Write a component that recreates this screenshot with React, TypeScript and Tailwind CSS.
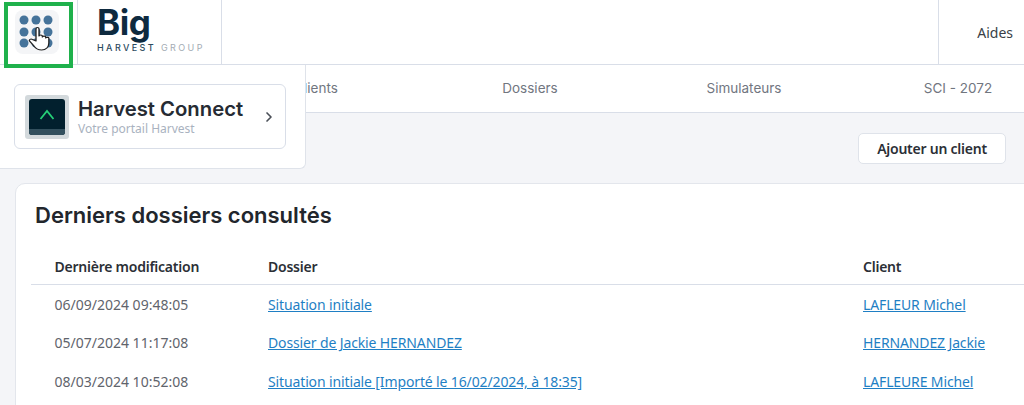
import { ChevronRight } from 'lucide-react'

const rows = [
  { date: '06/09/2024 09:48:05', dossier: 'Situation initiale', client: 'LAFLEUR Michel' },
  { date: '05/07/2024 11:17:08', dossier: 'Dossier de Jackie HERNANDEZ', client: 'HERNANDEZ Jackie' },
  { date: '08/03/2024 10:52:08', dossier: 'Situation initiale [Importé le 16/02/2024, à 18:35]', client: 'LAFLEURE Michel' },
]

const navItems = ['Clients', 'Dossiers', 'Simulateurs', 'SCI - 2072']

function AppsIcon() {
  return (
    <svg width="44" height="44" viewBox="0 0 44 44" className="rounded-lg bg-[#f4f5f7]">
      {[10, 22, 33].flatMap((cy) =>
        [9, 21, 33].map((cx) => <circle key={`${cx}-${cy}`} cx={cx} cy={cy} r="4.500" fill="#45739a" />),
      )}
      <path
        transform="translate(-3 0) scale(1.2 1)"
        d="M20 19c0-2 2.500-2 2.500 0v7c0-1.300 2.800-1.300 2.800 0v1c0-1.200 2.800-1.200 2.800 0v1c0-1 2.600-1 2.600 0v5c0 4-2.300 7-6 7-3 0-4.700-1.300-6.300-3.800l-3.700-5c-1-1.500 1-2.800 2.300-1.700L20 31z"
        fill="#fff"
        stroke="#222"
        strokeWidth="1.100"
        strokeLinejoin="round"
      />
    </svg>
  )
}

function BigLogo() {
  return (
    <div className="flex flex-col pb-[7px]">
      <span className="font-['Inter',sans-serif] text-[35px] leading-[34px] font-bold tracking-[-0.500px] text-[#0e2a3f]">Big</span>
      <span className="mt-[4px] font-['Inter',sans-serif] text-[9px] leading-[9px] tracking-[2.400px] whitespace-nowrap text-[#a3acb4]">
        <span className="font-medium text-[#2c4a5e]">HARVEST</span> GROUP
      </span>
    </div>
  )
}

function HarvestIcon() {
  return (
    <div className="flex h-[44px] w-[44px] items-center justify-center rounded-[3px] bg-[#d3d9dc]">
      <div className="flex h-[36px] w-[36px] flex-col overflow-hidden rounded-[3px] bg-[#02202e]">
        <div className="flex flex-1 items-center justify-center">
          <svg width="16" height="12" viewBox="0 0 16 12" fill="none">
            <path d="M1.500 11 8 3l6.500 8" stroke="#25d077" strokeWidth="1.800" />
          </svg>
        </div>
        <div className="h-[6px] bg-[#33505e]" />
      </div>
    </div>
  )
}

export default function App() {
  return (
    <div className="relative h-[405px] w-[1024px] overflow-hidden bg-[#f4f5f8] font-['Noto_Sans',sans-serif]">
      <header className="flex h-[65px] border-b border-[#d9dee8] bg-white">
        <div className="w-[78px] border-r border-[#d9dee8]" />
        <div className="flex w-[144px] items-center border-r border-[#d9dee8] pl-[19px]">
          <BigLogo />
        </div>
        <div className="ml-auto flex w-[86px] items-center justify-end border-l border-[#d9dee8] pr-[11px] text-[14px] text-[#3a3f47]">
          Aides
        </div>
      </header>

      <nav className="flex h-[48px] items-center border-b border-[#d9dee8] bg-white pl-[209px]">
        {navItems.map((item) => (
          <span key={item} className="w-[214px] shrink-0 text-center font-['Inter',sans-serif] text-[13.500px] text-[#71767f]">
            {item}
          </span>
        ))}
      </nav>

      <div className="flex justify-end pt-[20px] pr-[18px]">
        <button className="h-[31px] w-[148px] rounded-[5px] border border-[#dfe3ea] bg-white text-[14px] font-semibold tracking-[-0.240px] text-[#2b2f36]">
          Ajouter un client
        </button>
      </div>

      <section className="mt-[19px] ml-[15px] h-[300px] w-[1100px] rounded-tl-[10px] border border-[#e3e6ec] bg-white pt-[18px] pl-[15px]">
        <h2 className="pl-[4px] font-['Inter',sans-serif] text-[22px] leading-[26px] font-semibold text-[#22262c]">
          Derniers dossiers consultés
        </h2>
        <table className="mt-[18px] w-full border-collapse text-left text-[14px]">
          <thead>
            <tr className="h-[38px] border-b border-[#d9dee8] font-semibold tracking-[-0.240px] text-[#2b2f36]">
              <th className="w-[237px] pt-[3px] pl-[23.500px] font-semibold">Dernière modification</th>
              <th className="w-[595px] pt-[3px] font-semibold">Dossier</th>
              <th className="pt-[3px] font-semibold">Client</th>
            </tr>
          </thead>
          <tbody>
            {rows.map((row) => (
              <tr key={row.date} className="h-[38.500px]">
                <td className="pt-[2px] pl-[23.500px] text-[#5f646c]">{row.date}</td>
                <td className="pt-[2px]">
                  <a href="#" className="tracking-[-0.130px] text-[#1f7fc4] underline">{row.dossier}</a>
                </td>
                <td className="pt-[2px]">
                  <a href="#" className="tracking-[-0.130px] text-[#1f7fc4] underline">{row.client}</a>
                </td>
              </tr>
            ))}
          </tbody>
        </table>
      </section>

      {/* menu ouvert depuis le bouton d'applications */}
      <div className="absolute top-[65px] left-0 h-[104px] w-[306px] rounded-br-[6px] border-r border-b border-[#dfe3ea] bg-white pt-[19px] pl-[14px]">
        <div className="flex h-[65px] w-[272px] items-center rounded-[6px] border border-[#d9dee8] bg-white pl-[10px]">
          <HarvestIcon />
          <div className="ml-[9px] flex-1">
            <div className="font-['Inter',sans-serif] text-[20.300px] leading-[24px] font-semibold whitespace-nowrap text-[#262b33]">Harvest Connect</div>
            <div className="text-[12px] leading-[15px] text-[#a9b2c0]">Votre portail Harvest</div>
          </div>
          <ChevronRight size={16} strokeWidth={2.500} className="mr-[8px] text-[#4a4f57]" />
        </div>
      </div>

      <div className="absolute top-[2px] left-[4px] flex h-[66px] w-[69px] items-center justify-center border-[4px] border-[#1fb14c] bg-white pr-[4px] pb-[7px]">
        <AppsIcon />
      </div>
    </div>
  )
}
